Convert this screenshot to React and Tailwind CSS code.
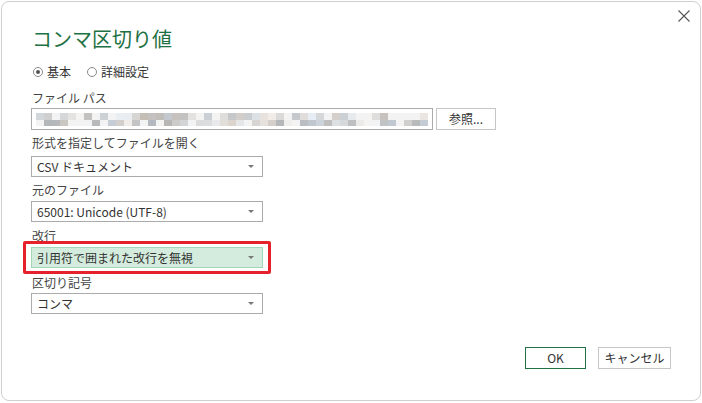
import { useMemo } from "react";

const Label = ({ children, className = "" }) => (
  <div className={"text-[12px] leading-[12px] text-[#444] " + className}>{children}</div>
);

const Select = ({ value, highlight = false }) => (
  <div
    className={
      "flex items-center justify-between w-[232px] h-[21px] border pl-[5px] pr-[8px] " +
      (highlight ? "bg-[#d4ecdd] border-[#a3d6b6]" : "bg-white border-[#ababab]")
    }
  >
    <span className="text-[12px] leading-[12px] text-[#333]">{value}</span>
    <span className="w-0 h-0 border-l-[3px] border-r-[3px] border-t-[3px] border-l-transparent border-r-transparent border-t-[#777]"></span>
  </div>
);

const Radio = ({ checked, label }) => (
  <div className="flex items-center gap-[4px]">
    <span className="flex items-center justify-center w-[10px] h-[10px] rounded-full border border-[#8a8a8a] bg-white">
      {checked && <span className="w-[4px] h-[4px] rounded-full bg-[#555]"></span>}
    </span>
    <span className="text-[12px] leading-[12px] text-[#333]">{label}</span>
  </div>
);

// blurred path, drawn as a mosaic
const Mosaic = () => {
  const rows = useMemo(() => {
    let seed = 7;
    const rnd = () => {
      seed = (seed * 9301 + 49297) % 233280;
      return seed / 233280;
    };
    return [0, 1].map(() =>
      Array.from({ length: 49 }, () => {
        if (rnd() < 0.2) return "#f3f3f3";
        const g = Math.round(180 + rnd() * 60);
        const t = Math.round((rnd() - 0.5) * 14);
        return `rgb(${g + t},${g},${g - t})`;
      })
    );
  }, []);
  return (
    <div className="flex flex-col">
      {rows.map((row, r) => (
        <div key={r} className={"flex " + (r === 0 ? "h-[7px]" : "h-[6px]")}>
          {row.map((c, i) => (
            <span key={i} className="w-[8px] h-full" style={{ background: c }}></span>
          ))}
        </div>
      ))}
    </div>
  );
};

export default function App() {
  return (
    <div className="w-[702px] h-[403px] bg-white pl-[1px] pt-[1px] font-['Noto_Sans_CJK_JP','Noto_Sans',sans-serif]">
      <div className="relative flex flex-col items-start w-[700px] h-[400px] border border-[#cfcfcf] rounded-[8px] pl-[29px] pt-[27px]">
        <button className="absolute top-[6px] right-[8px] w-[16px] h-[16px] flex items-center justify-center">
          <svg width="12" height="12" viewBox="0 0 12 12">
            <path d="M0.5 0.5 L11.5 11.5 M11.5 0.5 L0.5 11.5" stroke="#555" strokeWidth="1.1" />
          </svg>
        </button>

        <h1 className="text-[20px] leading-[20px] text-[#1e7145] pl-[1px]">コンマ区切り値</h1>

        <div className="flex gap-[16px] mt-[17px] pl-[2px]">
          <Radio checked label="基本" />
          <Radio label="詳細設定" />
        </div>

        <Label className="mt-[14px] pl-[1px]">ファイル パス</Label>
        <div className="flex gap-[3px] mt-[4px]">
          <div className="flex items-center w-[402px] h-[22px] border border-[#ababab] pl-[4px] overflow-hidden">
            <Mosaic />
          </div>
          <button className="w-[60px] h-[22px] border border-[#c6c6c6] bg-white text-[12px] leading-[12px] text-[#333]">
            参照...
          </button>
        </div>

        <Label className="mt-[7px] pl-[1px]">形式を指定してファイルを開く</Label>
        <div className="mt-[7px]">
          <Select value="CSV ドキュメント" />
        </div>

        <Label className="mt-[7px] pl-[1px]">元のファイル</Label>
        <div className="mt-[5px]">
          <Select value="65001: Unicode (UTF-8)" />
        </div>

        <Label className="mt-[8px] pl-[1px]">改行</Label>
        <div className="relative mt-[5px]">
          <Select value="引用符で囲まれた改行を無視" highlight />
          <div className="absolute -left-[8px] -right-[8px] -top-[6px] -bottom-[6px] border-[3px] border-[#e5212b] rounded-[2px]"></div>
        </div>

        <Label className="mt-[9px] pl-[1px]">区切り記号</Label>
        <div className="mt-[4px]">
          <Select value="コンマ" />
        </div>

        <div className="flex self-stretch justify-end gap-[12px] mt-[33px] pr-[29px]">
          <button className="w-[61px] h-[22px] border border-[#217346] bg-white text-[12px] leading-[12px] text-[#333]">
            OK
          </button>
          <button className="w-[73px] h-[22px] border border-[#c6c6c6] bg-white text-[12px] leading-[12px] text-[#333]">
            キャンセル
          </button>
        </div>
      </div>
    </div>
  );
}
